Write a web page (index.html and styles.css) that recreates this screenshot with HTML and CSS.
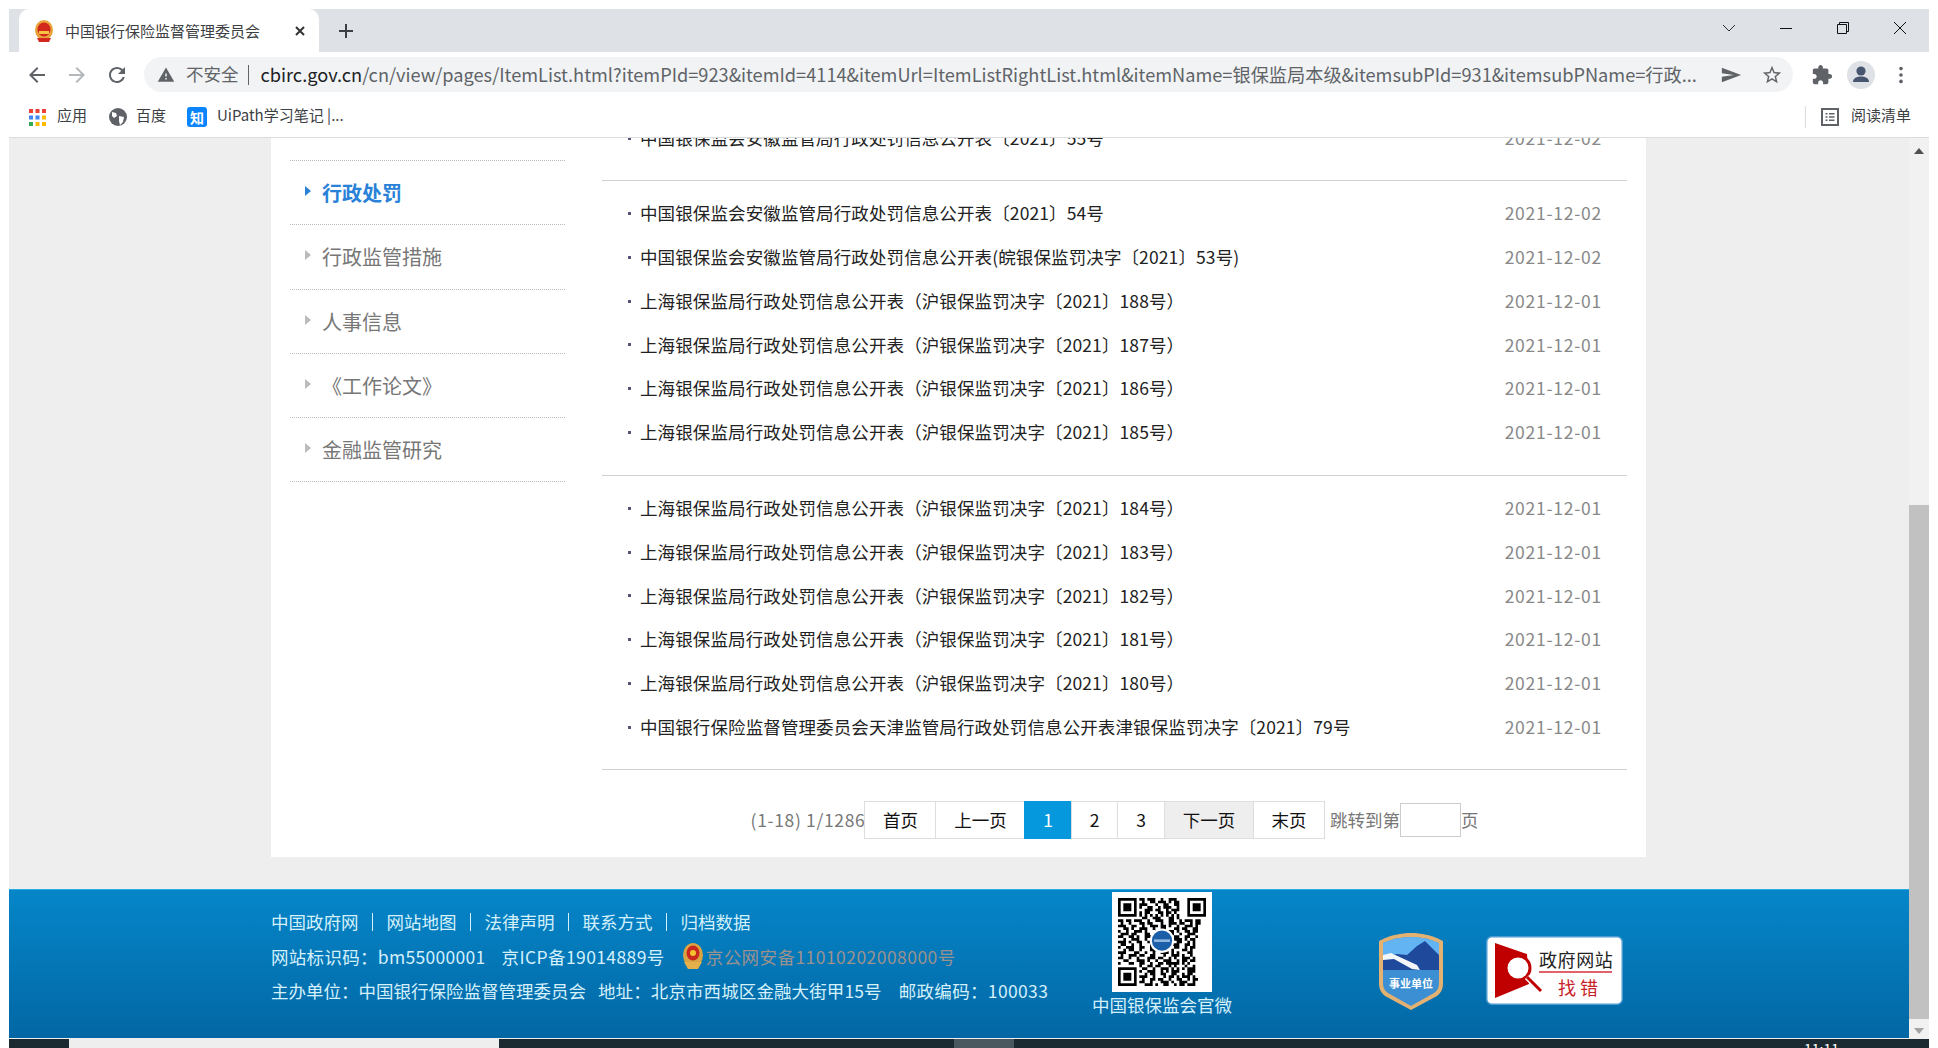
FILE: index.html
```html
<!DOCTYPE html>
<html lang="zh-CN">
<head>
    <meta charset="UTF-8">
    <title>中国银行保险监督管理委员会</title>
    <link rel="stylesheet" href="styles.css">
</head>
<body>
<div class="window">
    <div class="tabstrip">
        <div class="tab">
            <svg class="favicon" viewBox="0 0 20 22"><ellipse cx="10" cy="10" rx="9" ry="10" fill="#e8a33a"/><ellipse cx="10" cy="9.5" rx="6.5" ry="7" fill="#d3281c"/><path d="M5 11h10v3H5z" fill="#f4c542"/><path d="M3 18h14l-2 4H5z" fill="#d3281c"/></svg>
            <span class="tab-title">中国银行保险监督管理委员会</span>
            <svg class="tab-close" viewBox="0 0 12 12"><path d="M2 2l8 8M10 2l-8 8" stroke="#333" stroke-width="2"/></svg>
        </div>
        <svg class="tab-new" viewBox="0 0 16 16"><path d="M8 1v14M1 8h14" stroke="#3c4043" stroke-width="2"/></svg>
        <div class="win-controls">
            <div class="win-btn"><svg width="14" height="14" viewBox="0 0 14 14"><path d="M1 4l6 6 6-6" fill="none" stroke="#333"/></svg></div>
            <div class="win-btn"><svg width="14" height="14" viewBox="0 0 14 14"><path d="M1 7.5h12" stroke="#111"/></svg></div>
            <div class="win-btn"><svg width="14" height="14" viewBox="0 0 14 14"><path d="M1.5 3.5h9v9h-9zM3.5 3.5v-2h9v9h-2" fill="none" stroke="#111"/></svg></div>
            <div class="win-btn"><svg width="14" height="14" viewBox="0 0 14 14"><path d="M1 1l12 12M13 1L1 13" stroke="#111"/></svg></div>
        </div>
    </div>

    <div class="toolbar">
        <svg class="nav-icon" viewBox="0 0 24 24"><path fill="#5f6368" d="M20 11H7.83l5.59-5.59L12 4l-8 8 8 8 1.41-1.41L7.83 13H20v-2z"/></svg>
        <svg class="nav-icon" viewBox="0 0 24 24"><path fill="#b4b7bb" d="M12 4l-1.41 1.41L16.17 11H4v2h12.17l-5.58 5.59L12 20l8-8z"/></svg>
        <svg class="nav-icon" viewBox="0 0 24 24"><path fill="#5f6368" d="M17.65 6.35C16.2 4.9 14.21 4 12 4c-4.42 0-7.99 3.58-7.99 8s3.57 8 7.99 8c3.73 0 6.84-2.55 7.73-6h-2.08c-.82 2.33-3.04 4-5.65 4-3.31 0-6-2.69-6-6s2.69-6 6-6c1.66 0 3.14.69 4.22 1.78L13 11h7V4l-2.35 2.35z"/></svg>
        <div class="omnibox">
            <svg class="warn-icon" viewBox="0 0 24 24"><path fill="#5f6368" d="M1 21h22L12 2 1 21zm12-3h-2v-2h2v2zm0-4h-2v-4h2v4z"/></svg>
            <span class="not-secure">不安全</span>
            <span class="omni-sep"></span>
            <span class="url"><b>cbirc.gov.cn</b>/cn/view/pages/ItemList.html?itemPId=923&amp;itemId=4114&amp;itemUrl=ItemListRightList.html&amp;itemName=银保监局本级&amp;itemsubPId=931&amp;itemsubPName=行政...</span>
            <svg class="omni-icon send" viewBox="0 0 24 24"><path fill="#5f6368" d="M2.01 20L23 12 2.01 4 2 10.2l13 1.8-13 1.8z"/></svg>
            <svg class="omni-icon" viewBox="0 0 24 24"><path fill="#5f6368" d="M22 9.24l-7.19-.62L12 2 9.19 8.63 2 9.24l5.46 4.73L5.82 21 12 17.27 18.18 21l-1.63-7.03L22 9.24zM12 15.4l-3.76 2.27 1-4.28-3.32-2.88 4.38-.38L12 6.1l1.71 4.04 4.38.38-3.32 2.88 1 4.28L12 15.4z"/></svg>
        </div>
        <svg class="tool-icon puzzle" viewBox="0 0 24 24"><path fill="#5f6368" d="M20.5 11H19V7c0-1.1-.9-2-2-2h-4V3.5C13 2.12 11.88 1 10.5 1S8 2.12 8 3.5V5H4c-1.1 0-1.99.9-1.99 2v3.8H3.5c1.49 0 2.7 1.21 2.7 2.7s-1.21 2.7-2.7 2.7H2V20c0 1.1.9 2 2 2h3.8v-1.5c0-1.49 1.21-2.7 2.7-2.7 1.49 0 2.7 1.21 2.7 2.7V22H17c1.1 0 2-.9 2-2v-4h1.5c1.38 0 2.5-1.12 2.5-2.5S21.88 11 20.5 11z"/></svg>
        <div class="avatar"><svg width="28" height="28" viewBox="0 0 28 28"><circle cx="14" cy="10" r="4.6" fill="#47566e"/><path d="M6 21c0-4 4-5.5 8-5.5s8 1.500 8 5.500z" fill="#47566e"/></svg></div>
        <svg class="tool-icon dots" viewBox="0 0 6 24"><circle cx="3" cy="5" r="2" fill="#5f6368"/><circle cx="3" cy="12" r="2" fill="#5f6368"/><circle cx="3" cy="19" r="2" fill="#5f6368"/></svg>
    </div>

    <div class="bookmarks">
        <svg class="apps-icon" viewBox="0 0 17 17">
            <path fill="#ea4335" d="M0 0h4v4H0zM6.500 0h4v4h-4zM13 0h4v4h-4z"/>
            <path fill="#4285f4" d="M0 6.500h4v4H0zM6.500 6.500h4v4h-4z"/>
            <path fill="#fbbc05" d="M13 6.500h4v4h-4zM6.500 13h4v4h-4zM13 13h4v4h-4z"/>
            <path fill="#34a853" d="M0 13h4v4H0z"/>
        </svg>
        <span class="bm-text apps-text">应用</span>
        <svg class="globe-icon" viewBox="0 0 18 18"><circle cx="9" cy="9" r="9" fill="#5f6368"/><path d="M3 4l4 1 1 3-3 2-2-2zM10 8l5 1-1 5-3 3-1-4z" fill="#fff"/></svg>
        <span class="bm-text baidu-text">百度</span>
        <span class="zhi-icon">知</span>
        <span class="bm-text uipath-text">UiPath学习笔记 |...</span>
        <div class="reading-list">
            <svg width="18" height="18" viewBox="0 0 18 18"><path d="M1 1h16v16H1z" fill="none" stroke="#5f6368" stroke-width="2"/><path d="M4.500 5h2v1.500h-2zM8 5h5.500v1.500H8zM4.500 8.300h2v1.500h-2zM8 8.300h5.500v1.500H8zM4.500 11.600h2v1.500h-2zM8 11.600h5.500v1.500H8z" fill="#5f6368"/></svg>
            <span class="bm-text">阅读清单</span>
        </div>
    </div>

    <div class="viewport">
        <div class="page">
            <div class="panel">
                <ul class="side-nav">
                    <li class="side-item side-cut"><span class="side-arrow"></span>行政许可</li>
                    <li class="side-item side-active"><span class="side-arrow"></span>行政处罚</li>
                    <li class="side-item"><span class="side-arrow"></span>行政监管措施</li>
                    <li class="side-item"><span class="side-arrow"></span>人事信息</li>
                    <li class="side-item"><span class="side-arrow"></span>《工作论文》</li>
                    <li class="side-item"><span class="side-arrow"></span>金融监管研究</li>
                </ul>
                <div class="news">
                    <ul class="news-group first-group">
                        <li class="news-row"><span class="news-title">中国银保监会安徽监管局行政处罚信息公开表〔2021〕55号</span><span class="news-date">2021-12-02</span></li>
                    </ul>
                    <ul class="news-group">
                        <li class="news-row"><span class="news-title">中国银保监会安徽监管局行政处罚信息公开表〔2021〕54号</span><span class="news-date">2021-12-02</span></li>
                        <li class="news-row"><span class="news-title">中国银保监会安徽监管局行政处罚信息公开表(皖银保监罚决字〔2021〕53号)</span><span class="news-date">2021-12-02</span></li>
                        <li class="news-row"><span class="news-title">上海银保监局行政处罚信息公开表（沪银保监罚决字〔2021〕188号）</span><span class="news-date">2021-12-01</span></li>
                        <li class="news-row"><span class="news-title">上海银保监局行政处罚信息公开表（沪银保监罚决字〔2021〕187号）</span><span class="news-date">2021-12-01</span></li>
                        <li class="news-row"><span class="news-title">上海银保监局行政处罚信息公开表（沪银保监罚决字〔2021〕186号）</span><span class="news-date">2021-12-01</span></li>
                        <li class="news-row"><span class="news-title">上海银保监局行政处罚信息公开表（沪银保监罚决字〔2021〕185号）</span><span class="news-date">2021-12-01</span></li>
                    </ul>
                    <ul class="news-group">
                        <li class="news-row"><span class="news-title">上海银保监局行政处罚信息公开表（沪银保监罚决字〔2021〕184号）</span><span class="news-date">2021-12-01</span></li>
                        <li class="news-row"><span class="news-title">上海银保监局行政处罚信息公开表（沪银保监罚决字〔2021〕183号）</span><span class="news-date">2021-12-01</span></li>
                        <li class="news-row"><span class="news-title">上海银保监局行政处罚信息公开表（沪银保监罚决字〔2021〕182号）</span><span class="news-date">2021-12-01</span></li>
                        <li class="news-row"><span class="news-title">上海银保监局行政处罚信息公开表（沪银保监罚决字〔2021〕181号）</span><span class="news-date">2021-12-01</span></li>
                        <li class="news-row"><span class="news-title">上海银保监局行政处罚信息公开表（沪银保监罚决字〔2021〕180号）</span><span class="news-date">2021-12-01</span></li>
                        <li class="news-row"><span class="news-title">中国银行保险监督管理委员会天津监管局行政处罚信息公开表津银保监罚决字〔2021〕79号</span><span class="news-date">2021-12-01</span></li>
                    </ul>
                    <div class="pager">
                        <span class="pager-info">(1-18) 1/1286</span>
                        <span class="pager-btn w-first">首页</span>
                        <span class="pager-btn w-prev">上一页</span>
                        <span class="pager-btn w-num pager-on">1</span>
                        <span class="pager-btn w-num">2</span>
                        <span class="pager-btn w-num">3</span>
                        <span class="pager-btn w-prev pager-hover">下一页</span>
                        <span class="pager-btn w-first">末页</span>
                        <span class="pager-jump">跳转到第</span>
                        <input class="pager-input" type="text">
                        <span class="pager-unit">页</span>
                    </div>
                </div>
            </div>

            <div class="footer">
                <div class="footer-info">
                    <div class="footer-line">
                        <a class="foot-link">中国政府网</a><a class="foot-link">网站地图</a><a class="foot-link">法律声明</a><a class="foot-link">联系方式</a><a class="foot-link">归档数据</a>
                    </div>
                    <div class="footer-line">
                        <span class="site-code">网站标识码：bm55000001</span>
                        <span class="icp">京ICP备19014889号</span>
                        <svg class="police" viewBox="0 0 22 26"><ellipse cx="11" cy="12" rx="10" ry="12" fill="#d9a441"/><ellipse cx="11" cy="10" rx="6.500" ry="7.500" fill="#c8281e"/><circle cx="11" cy="10" r="3" fill="#f2c230"/><path d="M2 19h18l-4 7H6z" fill="#e3b04c"/></svg>
                        <span class="beian">京公网安备11010202008000号</span>
                    </div>
                    <div class="footer-line">
                        <span>主办单位：中国银行保险监督管理委员会</span>
                        <span class="addr">地址：北京市西城区金融大街甲15号</span>
                        <span class="post">邮政编码：100033</span>
                    </div>
                </div>
                <div class="qr-box">
                    <div class="qr-card">
                        <svg class="qr" viewBox="0 0 33 33">
                            <path fill-rule="evenodd" d="M0 0h7v7H0zM1 1v5h5V1zM2 2h3v3H2zM26 0h7v7h-7zM27 1v5h5V1zM28 2h3v3h-3zM0 26h7v7H0zM1 27v5h5v-5zM2 28h3v3H2z"/>
                            <path stroke="#000" stroke-width="1" fill="none" d="
                            M8 .5h2m1 0h3m2 0h1m2 0h3
                            M9 1.500h1m2 0h2m1 0h3m1 0h1m1 0h2
                            M8 2.500h3m3 0h1m2 0h2m2 0h2
                            M8 3.500h1m2 0h2m2 0h1m1 0h3m2 0h1
                            M10 4.500h3m1 0h2m2 0h1m1 0h3
                            M8 5.500h1m1 0h2m3 0h2m1 0h2m1 0h1
                            M8 6.500h1m1 0h1m1 0h1m1 0h1m1 0h1m1 0h1m1 0h1m1 0h1
                            M9 7.500h2m2 0h3m3 0h2m1 0h1
                            M0 8.500h2m1 0h2m1 0h3m2 0h1m2 0h3m2 0h2m2 0h1m1 0h3m1 0h2
                            M1 9.500h1m2 0h1m3 0h2m1 0h2m3 0h1m2 0h3m1 0h2m2 0h1m1 0h2
                            M0 10.500h3m2 0h2m2 0h1m2 0h3m1 0h2m1 0h1m2 0h1m2 0h3m1 0h1
                            M2 11.500h2m1 0h1m2 0h3m2 0h1m2 0h2m3 0h2m1 0h2m2 0h2
                            M0 12.500h1m2 0h1m2 0h3m1 0h1m3 0h1m4 0h2m1 0h1m2 0h2m1 0h2
                            M1 13.500h3m1 0h2m3 0h2m2 0h1m5 0h1m2 0h1m2 0h3
                            M0 14.500h2m2 0h2m1 0h1m2 0h3m8 0h2m2 0h2m2 0h1
                            M2 15.500h1m2 0h3m2 0h1m1 0h1m8 0h3m1 0h1m1 0h2
                            M0 16.500h3m1 0h1m2 0h2m2 0h2m7 0h1m1 0h2m2 0h1m1 0h1
                            M1 17.500h2m2 0h1m2 0h1m3 0h1m7 0h3m2 0h2m1 0h1
                            M0 18.500h1m2 0h3m2 0h2m2 0h1m1 0h1m3 0h1m2 0h2m2 0h1m1 0h2
                            M2 19.500h1m1 0h2m2 0h1m3 0h3m1 0h2m2 0h1m3 0h2m1 0h1
                            M0 20.500h3m3 0h2m2 0h1m2 0h1m2 0h3m1 0h1m1 0h1m3 0h2
                            M1 21.500h1m2 0h3m1 0h2m2 0h2m3 0h1m2 0h3m1 0h1m2 0h1
                            M0 22.500h2m2 0h1m2 0h1m3 0h3m1 0h2m2 0h1m1 0h1m2 0h3m1 0h1
                            M2 23.500h2m3 0h3m1 0h1m2 0h1m2 0h3m2 0h1m1 0h2m1 0h2
                            M0 24.500h1m3 0h2m2 0h2m2 0h1m2 0h2m1 0h5m1 0h1m1 0h1
                            M8 25.500h1m2 0h2m1 0h2m3 0h1m1 0h1m3 0h1m2 0h1
                            M9 26.500h2m2 0h1m2 0h3m1 0h1m1 0h1m1 0h1m1 0h3
                            M8 27.500h1m2 0h3m2 0h1m1 0h1m1 0h3m3 0h3
                            M10 28.500h1m1 0h2m2 0h2m2 0h2m2 0h1m1 0h2
                            M8 29.500h3m2 0h1m3 0h1m1 0h2m1 0h1m1 0h3m1 0h1
                            M9 30.500h1m2 0h2m1 0h2m2 0h1m2 0h2m2 0h1m1 0h2
                            M8 31.500h2m2 0h1m3 0h3m1 0h1m2 0h3m2 0h1
                            M10 32.500h3m1 0h1m2 0h2m2 0h1m1 0h2m1 0h3"/>
                            <circle cx="16.500" cy="16" r="4.600" fill="#fff"/>
                            <circle cx="16.500" cy="16" r="3.800" fill="#1b5fa8"/>
                            <path d="M13.500 15.500h6v1h-6z" fill="#8fb6dc"/>
                        </svg>
                    </div>
                    <span class="qr-caption">中国银保监会官微</span>
                </div>
                <svg class="org-badge" viewBox="0 0 64 78">
                    <path d="M32 1c10 0 20 2 30 7 1 0 2 1 2 2v42c0 5-2 9-6 12L32 78 6 64c-4-3-6-7-6-12V10c0-1 1-2 2-2C12 3 22 1 32 1z" fill="#e3b172"/>
                    <path d="M32 5c10 0 19 2 28 6v41c0 4-2 7-5 9L32 74 9 61c-3-2-5-5-5-9V11c9-4 18-6 28-6z" fill="#3d8fd4"/>
                    <path d="M4 11c9-4 18-6 28-6s19 2 28 6v24H4z" fill="#63b4f2"/>
                    <path d="M4 38V24l14-2 10 1 10-9 8-5 14 14v15z" fill="#1f4a9c"/>
                    <path d="M4 23l8-2 26 12 3 5-8-1-18-10-11 1z" fill="#f3f6f9"/>
                    <text class="badge-text" x="32" y="56">事业单位</text>
                </svg>
                <svg class="err-badge" viewBox="0 0 137 69">
                    <rect x=".75" y=".75" width="135.500" height="67.500" rx="5" fill="#fff" stroke="#4b9bd0" stroke-width="1.500"/>
                    <path d="M9 7l32 11 2 30-34 14z" fill="#c00000"/>
                    <circle cx="32" cy="32" r="12" fill="#fff" stroke="#c00000" stroke-width="3"/>
                    <path d="M41 41l14 14" stroke="#fff" stroke-width="6"/>
                    <path d="M41 41l14 14" stroke="#c00000" stroke-width="3"/>
                    <text class="err-title" x="53" y="31">政府网站</text>
                    <rect x="53" y="35" width="73" height="2" fill="#e0636b"/>
                    <text class="err-sub" x="72" y="59">找 错</text>
                </svg>
            </div>
        </div>
        <div class="scrollbar">
            <span class="scroll-up"></span>
            <div class="scroll-thumb"></div>
            <span class="scroll-down"></span>
        </div>
    </div>

    <div class="taskbar">
        <div class="task-search"></div>
        <div class="task-app"></div>
        <span class="task-clock">11:11</span>
    </div>
</div>
</body>
</html>
```

FILE: styles.css
```css
* {
    box-sizing: border-box;
}
html, body {
    margin: 0;
    height: 100%;
    overflow: hidden;
    background: #fff;
}
body {
    font-family: "Noto Sans CJK SC", "Noto Sans", sans-serif;
    font-size: 17.5px;
}
ul {
    list-style: none;
    margin: 0;
    padding: 0;
}
.window {
    display: flex;
    flex-direction: column;
    height: 1048px;
    padding: 9px 9px 0;
}

/* browser chrome */
.tabstrip {
    display: flex;
    align-items: center;
    height: 43px;
    flex: none;
    background: #dee1e6;
    padding-left: 10px;
}
.tab {
    display: flex;
    align-items: center;
    width: 300px;
    height: 43px;
    background: #fff;
    border-radius: 10px 10px 0 0;
    padding-left: 15px;
}
.favicon {
    width: 20px;
    height: 22px;
}
.tab-title {
    margin-left: 11px;
    font-size: 15px;
    color: #3c4043;
    white-space: nowrap;
}
.tab-close {
    width: 12px;
    height: 12px;
    margin-left: 34px;
}
.tab-new {
    width: 16px;
    height: 16px;
    margin-left: 19px;
}
.win-controls {
    display: flex;
    margin-left: auto;
    margin-top: -6px;
    margin-right: 1px;
}
.win-btn {
    display: flex;
    justify-content: center;
    width: 57px;
}
.toolbar {
    display: flex;
    align-items: center;
    height: 45px;
    flex: none;
    background: #fff;
}
.nav-icon {
    width: 24px;
    height: 24px;
    margin-left: 16px;
}
.omnibox {
    display: flex;
    align-items: center;
    width: 1649px;
    height: 35px;
    margin-left: 15px;
    padding-left: 13px;
    background: #f1f3f4;
    border-radius: 18px;
}
.warn-icon {
    width: 18px;
    height: 18px;
}
.not-secure {
    margin-left: 11px;
    padding-bottom: 2px;
    color: #5f6368;
    font-size: 17.5px;
}
.omni-sep {
    width: 1px;
    height: 20px;
    margin: 0 12px 0 9px;
    background: #5f6368;
}
.url {
    width: 1436px;
    padding-bottom: 2px;
    color: #5f6368;
    font-size: 18.2px;
    white-space: nowrap;
    overflow: hidden;
}
.url b {
    font-weight: 400;
    color: #202124;
}
.omni-icon {
    width: 22px;
    height: 22px;
    margin-left: 19px;
}
.omni-icon.send {
    margin-left: 23px;
}
.tool-icon {
    width: 22px;
    height: 22px;
}
.puzzle {
    margin-left: 18px;
}
.avatar {
    display: flex;
    align-items: center;
    justify-content: center;
    width: 28px;
    height: 28px;
    margin-left: 14px;
    border-radius: 50%;
    background: #dee1e6;
}
.dots {
    width: 6px;
    margin-left: 23px;
}
.bookmarks {
    display: flex;
    align-items: center;
    height: 41px;
    flex: none;
    padding-left: 20px;
    background: #fff;
    border-bottom: 1px solid #dadce0;
}
.apps-icon {
    width: 17px;
    height: 17px;
}
.bm-text {
    padding-bottom: 5px;
    font-size: 15px;
    color: #3c4043;
    white-space: nowrap;
}
.apps-text {
    margin-left: 11px;
}
.globe-icon {
    width: 18px;
    height: 18px;
    margin-left: 22px;
}
.baidu-text {
    margin-left: 9px;
}
.zhi-icon {
    display: flex;
    align-items: center;
    justify-content: center;
    width: 20px;
    height: 20px;
    margin-left: 21px;
    background: #0a84ff;
    border-radius: 3px;
    color: #fff;
    font-size: 14px;
    font-weight: 700;
}
.uipath-text {
    margin-left: 10px;
}
.reading-list {
    display: flex;
    align-items: center;
    gap: 12px;
    height: 22px;
    margin-left: auto;
    padding-left: 15px;
    padding-right: 18px;
    border-left: 1px solid #dadce0;
}

/* page */
.viewport {
    display: flex;
    flex: 1;
    min-height: 0;
}
.page {
    flex: 1;
    min-width: 0;
    overflow: hidden;
    background: #eee;
}
.panel {
    display: flex;
    width: 1375px;
    margin: -42px 0 0 262px;
    padding: 0 19px;
    background: #fff;
}
.side-nav {
    width: 275px;
    flex: none;
    padding-top: 1px;
}
.side-item {
    display: flex;
    align-items: center;
    height: 64.2px;
    padding-left: 15px;
    font-size: 20px;
    color: #777;
    border-bottom: 1px dotted #bbb;
}
.side-cut {
    padding-bottom: 6px;
}
.side-arrow {
    width: 0;
    height: 0;
    margin: -3px 11px 0 0;
    border-left: 6px solid #bbb;
    border-top: 5px solid transparent;
    border-bottom: 5px solid transparent;
}
.side-active {
    color: #2a82d8;
    font-weight: 700;
}
.side-active .side-arrow {
    border-left-color: #2a82d8;
}
.news {
    flex: 1;
    min-width: 0;
    margin-left: 37px;
}
.news-group {
    padding: 10px 25px 21px 26px;
    border-bottom: 1px solid #d0d0d0;
}
.first-group {
    padding-top: 20px;
    padding-bottom: 20px;
}
.news-row {
    display: flex;
    align-items: center;
    height: 43.8px;
}
.news-title {
    flex: 1;
    color: #222;
    letter-spacing: .11px;
    white-space: nowrap;
}
.news-title::before {
    content: "";
    display: inline-block;
    width: 3px;
    height: 3px;
    margin: 0 9px 4px 0;
    background: #557;
    vertical-align: middle;
}
.news-date {
    color: #888;
    letter-spacing: .75px;
}
.pager {
    display: flex;
    align-items: center;
    justify-content: center;
    height: 87px;
    padding-bottom: 18px;
    padding-top: 31px;
    color: #777;
}
.pager-info, .pager-jump, .pager-unit {
    padding-bottom: 2px;
}
.pager-info {
    letter-spacing: .65px;
}
.pager-btn {
    display: flex;
    align-items: center;
    justify-content: center;
    height: 38px;
    margin-left: -1px;
    padding-bottom: 2px;
    border: 1px solid #ddd;
    color: #111;
    background: #fff;
}
.w-first {
    width: 72px;
}
.w-prev {
    width: 90px;
}
.w-num {
    width: 47.5px;
}
.pager-on {
    background: #0598dc;
    border-color: #0598dc;
    color: #fff;
}
.pager-hover {
    background: #eee;
}
.pager-jump {
    margin-left: 5px;
}
.pager-input {
    width: 61px;
    height: 34px;
    padding: 0;
    border: 1px solid #ccc;
    background: #fff;
}

/* footer */
.footer {
    display: flex;
    height: 149px;
    margin-top: 32px;
    padding-left: 262px;
    background: linear-gradient(#0586c9, #0367a4);
    border-top: 1px solid #29abe2;
    color: #d4f0fb;
}
.footer-info {
    width: 821px;
    flex: none;
    padding-top: 14px;
}
.footer-line {
    display: flex;
    align-items: center;
    height: 34.5px;
    white-space: nowrap;
}
.foot-link + .foot-link {
    margin-left: 13px;
    padding-left: 14px;
    border-left: 1px solid #d4f0fb;
    line-height: 18px;
}
.site-code {
    letter-spacing: .3px;
}
.icp {
    margin-left: 16px;
    letter-spacing: .4px;
}
.police {
    width: 22px;
    height: 26px;
    margin-left: 17px;
}
.beian {
    margin-left: 2px;
    color: #9c918c;
    letter-spacing: .45px;
}
.addr {
    margin-left: 12px;
    letter-spacing: .1px;
}
.post {
    margin-left: 17px;
    letter-spacing: .35px;
}
.qr-box {
    display: flex;
    flex-direction: column;
    align-items: center;
    width: 140px;
    flex: none;
    padding-top: 2px;
}
.qr-card {
    width: 100px;
    height: 100px;
    padding: 6px;
    background: #fff;
}
.qr {
    display: block;
    width: 88px;
    height: 88px;
    filter: blur(.4px);
}
.qr-caption {
    white-space: nowrap;
}
.org-badge {
    width: 64px;
    height: 78px;
    margin: 42px 0 0 147px;
}
.badge-text {
    font-size: 11px;
    font-weight: 700;
    fill: #fff;
    text-anchor: middle;
}
.err-badge {
    width: 137px;
    height: 69px;
    margin: 46px 0 0 43px;
}
.err-title {
    font-size: 18px;
    letter-spacing: .6px;
    fill: #222;
}
.err-sub {
    font-size: 18px;
    fill: #c81e28;
}

/* scrollbar */
.scrollbar {
    display: flex;
    flex-direction: column;
    width: 20px;
    flex: none;
    background: #f1f1f1;
    position: relative;
}
.scroll-up, .scroll-down {
    position: absolute;
    left: 5px;
    width: 0;
    height: 0;
    border-left: 5px solid transparent;
    border-right: 5px solid transparent;
}
.scroll-up {
    top: 10px;
    border-bottom: 6px solid #505050;
}
.scroll-down {
    bottom: 5px;
    border-top: 6px solid #a3a3a3;
}
.scroll-thumb {
    width: 100%;
    height: 514px;
    margin-top: auto;
    margin-bottom: 20px;
    background: #c1c1c1;
}

/* taskbar, mostly cut off by the window edge */
.taskbar {
    position: relative;
    display: flex;
    height: 9px;
    flex: none;
    overflow: hidden;
    padding-left: 60px;
    background: #1b2a30;
}
.task-search {
    width: 430px;
    background: #eee;
}
.task-app {
    width: 60px;
    margin-left: 455px;
    background: #4a5860;
}
.task-clock {
    position: absolute;
    top: 3px;
    left: 1795px;
    color: #fff;
    font-size: 14px;
    line-height: 14px;
}
```
